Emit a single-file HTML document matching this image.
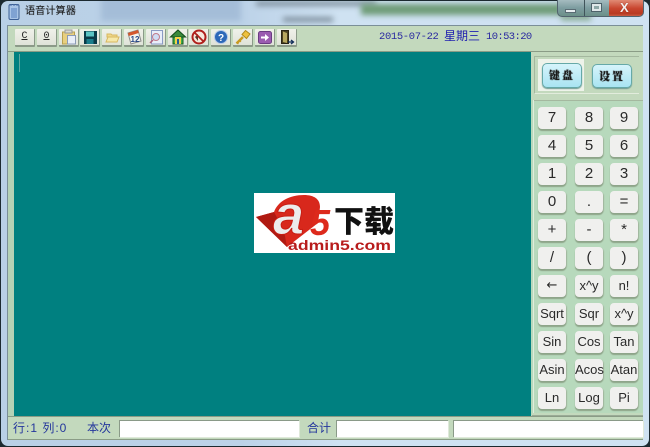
<!DOCTYPE html>
<html><head><meta charset="utf-8">
<style>
html,body{margin:0;padding:0;background:#1c2a30}
#w{position:relative;width:650px;height:447px;overflow:hidden;font-family:"Liberation Sans","Noto Sans CJK SC",sans-serif;background:#1c2a30}
#w div,#w span{position:absolute;box-sizing:border-box}
.frame{left:1px;top:1px;width:648px;height:445px;border-radius:7px;overflow:hidden;background:linear-gradient(90deg,#b9d0e6 0,#bcd2e8 240px,#cfe2f2 340px,#cfe2f2 650px)}
.blur{filter:blur(3px)}
.client{left:7px;top:25px;width:636px;height:415px;background:#c3d9bd;border-top:1px solid #7b8f98;border-left:1px solid #7b8f98}
.tb{top:29px;height:18px;width:20px;background:linear-gradient(#f0f1ea,#dfe3d8);border-right:1px solid #8b9a88;border-bottom:2px solid #8b9a88;border-radius:1px}
.tb svg{position:absolute;left:1px;top:0}
.tb b{position:absolute;left:0;width:19px;top:1px;text-align:center;font:normal 10px/14px "Liberation Mono",monospace;text-decoration:underline;color:#222}
.k{width:28px;height:22px;background:#f0f0ee;border-radius:4px;box-shadow:0 2px 1px #8ea58a,1px 1px 1px #a4b8a0;text-align:center;font-size:13px;line-height:21px;color:#2a2a2a;font-family:"Liberation Sans",sans-serif}
.k.d{font-size:15px}
.b{width:40px;height:25px;border-radius:5px;background:linear-gradient(#d6f4fb,#a9e4f2);border:1px solid #66a9a8;box-shadow:0 1px 1px #6f9a92;text-align:center;font:900 11px/23px "Noto Serif CJK SC",serif;letter-spacing:2px;color:#1a1a1a;text-shadow:0 0 1px #333}
.f{top:420px;height:17px;background:#fff;border-left:1px solid #8a9a88;border-top:1px solid #8a9a88;box-shadow:1px 1px 0 #dfe9da}
.st{top:421px;font-size:12px;line-height:15px;color:#24369c;white-space:nowrap}
</style></head><body>
<div id="w">
<div class="frame">
  <div class="blur" style="left:100px;top:-6px;width:140px;height:26px;background:#a4bdd8"></div>
  <div class="blur" style="left:255px;top:0;width:120px;height:5px;background:#7e8f9c"></div>
  <div class="blur" style="left:282px;top:16px;width:50px;height:5px;background:#7f909e"></div>
  <div class="blur" style="left:360px;top:3px;width:205px;height:11px;background:#6f9c78"></div>
  <div class="blur" style="left:560px;top:0;width:30px;height:20px;background:#8fb09c"></div>
</div>
<!-- title -->
<svg style="position:absolute;left:7px;top:3px" width="14" height="18" viewBox="0 0 14 18"><rect x="2" y="1.500" width="10" height="15" rx="1.500" fill="#a8c4e6" stroke="#3c5f94"/><path d="M4 1v2M7 1v2M10 1v2" stroke="#4a6ea4"/><rect x="4" y="5" width="6" height="10" fill="#7fa2d2"/></svg>
<span style="position:absolute;left:25px;top:5px;font-size:10.200px;line-height:14px;color:#1a1a1a;white-space:nowrap;text-shadow:0 0 1px #8a9aa8">语音计算器</span>
<!-- caption buttons -->
<div style="left:557px;top:0;width:87px;height:17px;border:1px solid #51636e;border-top:0;border-radius:0 0 5px 5px;overflow:hidden;background:linear-gradient(#a6bcc0,#7d9da0 50%,#6c9088)">
  <div style="left:26px;top:0;width:1px;height:17px;background:#40545a"></div>
  <div style="left:51px;top:0;width:35px;height:17px;background:linear-gradient(#e08a74,#c8452e 50%,#b83a22 80%,#cf6a50)"></div>
  <div style="left:7px;top:9px;width:11px;height:4px;background:#e8eef0;border:1px solid #5a6c74"></div>
  <div style="left:33px;top:3px;width:11px;height:9px;background:#dfe8ea;border:1px solid #4e626a"><div style="left:2px;top:2px;width:5px;height:3px;background:#8ea8a8"></div></div>
  <span style="left:62px;top:1px;font:bold 13px/14px 'Liberation Sans',sans-serif;color:#f4f0ee;text-shadow:0 0 1px #7a2010">X</span>
</div>
<div class="client">
  <div style="left:0;top:25px;width:635px;height:1px;background:#8a9c86"></div>
</div>
<!-- toolbar -->
<div class="tb" style="left:15px"><b>C</b></div>
<div class="tb" style="left:37px"><b>0</b></div>
<div class="tb" style="left:59px"><svg width="18" height="16" viewBox="0 0 18 16"><rect x="2.500" y="3" width="12" height="12" fill="#e8cf7e" stroke="#b8a050"/><rect x="5" y="1" width="7" height="3" fill="#d8d8d0" stroke="#999"/><rect x="7.500" y="6.500" width="8" height="8.500" fill="#e8eef8" stroke="#8a9ab6"/></svg></div>
<div class="tb" style="left:80px"><svg width="18" height="16" viewBox="0 0 18 16"><rect x="3" y="2" width="13" height="13" fill="#0a3a48"/><rect x="5" y="2.500" width="8" height="5" fill="#5cc4c4"/><rect x="5.500" y="10" width="7" height="5" fill="#1a7e8c"/></svg></div>
<div class="tb" style="left:102px"><svg width="18" height="16" viewBox="0 0 18 16"><path d="M4 5h4l1 1h5v2H4z" fill="#efd88a" stroke="#d8b860"/><path d="M3 13l2-5h11l-2 5z" fill="#f6e8a8" stroke="#d8b860"/></svg></div>
<div class="tb" style="left:124px"><svg width="18" height="16" viewBox="0 0 18 16"><path d="M3 4l10-3 3 11-10 3z" fill="#f4f4ee" stroke="#8a8a8a"/><path d="M3 4l10-3 .8 3-10 3z" fill="#d4562c"/><text x="5.500" y="13" font-size="8" font-weight="bold" fill="#2a4a8a" font-family="Liberation Sans">12</text></svg></div>
<div class="tb" style="left:146px"><svg width="18" height="16" viewBox="0 0 18 16"><rect x="4.500" y="1.500" width="11" height="13.500" fill="#e8eefa" stroke="#8a9ac4"/><circle cx="9" cy="8" r="3.500" fill="#cfdcf4" stroke="#c07a8a"/><path d="M6 11l-3 3" stroke="#b0607a" stroke-width="1.500"/></svg></div>
<div class="tb" style="left:168px"><svg width="18" height="16" viewBox="0 0 18 16"><path d="M9 1L1.500 8H4v7h10V8h2.500z" fill="#3fae4a" stroke="#1a5a20"/><path d="M9 1L1.500 8h15z" fill="#3b8a3c" stroke="#14501c"/><rect x="6" y="8" width="6" height="7" fill="#f2d24a"/><rect x="8" y="10" width="2" height="5" fill="#1a5e9e"/></svg></div>
<div class="tb" style="left:189px"><svg width="18" height="16" viewBox="0 0 18 16"><circle cx="9" cy="8" r="6.500" fill="#f6e8dc" stroke="#b0201c" stroke-width="2"/><path d="M5 8l3-3v7z" fill="#5a3a2a"/><path d="M4 3l10 10" stroke="#b0201c" stroke-width="1.800"/></svg></div>
<div class="tb" style="left:211px"><svg width="18" height="16" viewBox="0 0 18 16"><circle cx="9" cy="8" r="6.500" fill="#2c68b8" stroke="#b4c8e8"/><text x="9" y="12" text-anchor="middle" font-size="10" font-weight="bold" fill="#fff" font-family="Liberation Sans">?</text></svg></div>
<div class="tb" style="left:233px"><svg width="18" height="16" viewBox="0 0 18 16"><path d="M2.500 14.500L9 8" stroke="#c89a20" stroke-width="2.500"/><path d="M2.500 13l2 2M5 11l2 2" stroke="#c89a20"/><path d="M8 5.500l3.500-4 4.500 3.500-3.500 4.500z" fill="#eec13e" stroke="#b08a1e"/></svg></div>
<div class="tb" style="left:255px"><svg width="18" height="16" viewBox="0 0 18 16"><rect x="2.500" y="2.500" width="13" height="12" rx="2" fill="#9a5cb0" stroke="#6a3c82"/><path d="M5 7.500h4V5l4 3.500-4 3.500V9.500H5z" fill="#fff"/></svg></div>
<div class="tb" style="left:277px"><svg width="18" height="16" viewBox="0 0 18 16"><path d="M3.500 1.500h7v13h-7z" fill="#4a4020" stroke="#2a2414"/><path d="M5 2.500l4 1.500v10l-4-1z" fill="#b8a860"/><path d="M10 13h5M13 11l2.500 2-2.500 2" stroke="#122e5a" stroke-width="1.300" fill="none"/></svg></div>
<!-- datetime -->
<span style="position:absolute;left:379px;top:30px;font:10.500px/14px 'Liberation Mono',monospace;color:#2a2aa0;letter-spacing:-.35px;white-space:nowrap">2015-07-22</span>
<span style="position:absolute;left:444px;top:29px;font-size:12px;line-height:15px;color:#2020b0;white-space:nowrap">星期三</span>
<span style="position:absolute;left:486px;top:30px;font:10.500px/14px 'Liberation Mono',monospace;color:#2a2aa0;letter-spacing:-.6px;white-space:nowrap">10:53:20</span>
<!-- main teal -->
<div style="left:14px;top:52px;width:517px;height:364px;background:#008080"></div>
<div style="left:8px;top:52px;width:6px;height:364px;background:#b5d2b6"></div>
<div style="left:19px;top:54px;width:1px;height:18px;background:#5fa8a0"></div>
<!-- logo -->
<svg style="position:absolute;left:254px;top:193px" width="141" height="60" viewBox="0 0 141 60">
  <rect width="141" height="60" fill="#fff"/>
  <path d="M2 24L20 19C24 8 36 2 50 2C60 2 66 6 66 14L64 30 33 54z" fill="#d8281c"/>
  <path d="M2 24L20 19 30 38 33 54z" fill="#b01a12"/>
  <text x="19" y="41" font-family="Liberation Sans" font-size="56" font-weight="bold" font-style="italic" fill="#ececec" stroke="#c81e14" stroke-width="1">a</text>
  <text x="56" y="42" font-family="Liberation Sans" font-size="36" font-weight="bold" fill="#dd2a1c" font-style="italic">5</text>
  <text x="80" y="39" font-family="Noto Sans CJK SC" font-size="30" font-weight="900" fill="#111">下载</text>
  <text x="34" y="57" font-family="Liberation Sans" font-size="14" font-weight="bold" fill="#b81c1c" textLength="103" lengthAdjust="spacingAndGlyphs">admin5.com</text>
</svg>
<!-- right panels -->
<div style="left:531px;top:52px;width:112px;height:364px;background:#b7d9bc"></div>
<div style="left:531px;top:52px;width:112px;height:48px;background:#c3d9bd"></div>
<div style="left:534px;top:56px;width:105px;height:38px;background:#c3d9bd;border-top:1px solid #a4b89f;border-bottom:1px solid #e2ecdc;border-left:1px solid #a4b89f"></div>
<div style="left:538px;top:59px;width:46px;height:32px;background:#eef3ea"></div>
<div class="b" style="left:542px;top:63px">键盘</div>
<div class="b" style="left:592px;top:64px;height:24px">设置</div>
<div style="left:533px;top:100px;width:110px;height:1px;background:#a4b89f"></div>
<div style="left:533px;top:100px;width:1px;height:316px;background:#e0ecdc"></div>
<div style="left:532px;top:413px;width:111px;height:3px;background:#c3d9bd;border-bottom:1px solid #9aab96"></div>
<!-- keys -->
<div class="k d" style="left:538px;top:107px">7</div><div class="k d" style="left:575px;top:107px">8</div><div class="k d" style="left:610px;top:107px">9</div>
<div class="k d" style="left:538px;top:135px">4</div><div class="k d" style="left:575px;top:135px">5</div><div class="k d" style="left:610px;top:135px">6</div>
<div class="k d" style="left:538px;top:163px">1</div><div class="k d" style="left:575px;top:163px">2</div><div class="k d" style="left:610px;top:163px">3</div>
<div class="k d" style="left:538px;top:191px">0</div><div class="k d" style="left:575px;top:191px">.</div><div class="k d" style="left:610px;top:191px">=</div>
<div class="k d" style="left:538px;top:219px">+</div><div class="k d" style="left:575px;top:219px">-</div><div class="k d" style="left:610px;top:219px">*</div>
<div class="k d" style="left:538px;top:247px">/</div><div class="k d" style="left:575px;top:247px">(</div><div class="k d" style="left:610px;top:247px">)</div>
<div class="k" style="left:538px;top:275px;font-family:'DejaVu Sans',sans-serif">←</div><div class="k" style="left:575px;top:275px">x^y</div><div class="k" style="left:610px;top:275px">n!</div>
<div class="k" style="left:538px;top:303px">Sqrt</div><div class="k" style="left:575px;top:303px">Sqr</div><div class="k" style="left:610px;top:303px">x^y</div>
<div class="k" style="left:538px;top:331px">Sin</div><div class="k" style="left:575px;top:331px">Cos</div><div class="k" style="left:610px;top:331px">Tan</div>
<div class="k" style="left:538px;top:359px">Asin</div><div class="k" style="left:575px;top:359px">Acos</div><div class="k" style="left:610px;top:359px">Atan</div>
<div class="k" style="left:538px;top:387px">Ln</div><div class="k" style="left:575px;top:387px">Log</div><div class="k" style="left:610px;top:387px">Pi</div>
<!-- status -->
<div style="left:8px;top:416px;width:635px;height:24px;background:#c3d9bd;border-top:1px solid #8a9c86;border-bottom:1px solid #8a9c86"></div>
<span class="st" style="left:13px;letter-spacing:1px">行:1 列:0</span>
<span class="st" style="left:87px">本次</span>
<div class="f" style="left:119px;width:180px"></div>
<span class="st" style="left:307px">合计</span>
<div class="f" style="left:336px;width:112px"></div>
<div class="f" style="left:453px;width:190px"></div>
</div>
</body></html>
